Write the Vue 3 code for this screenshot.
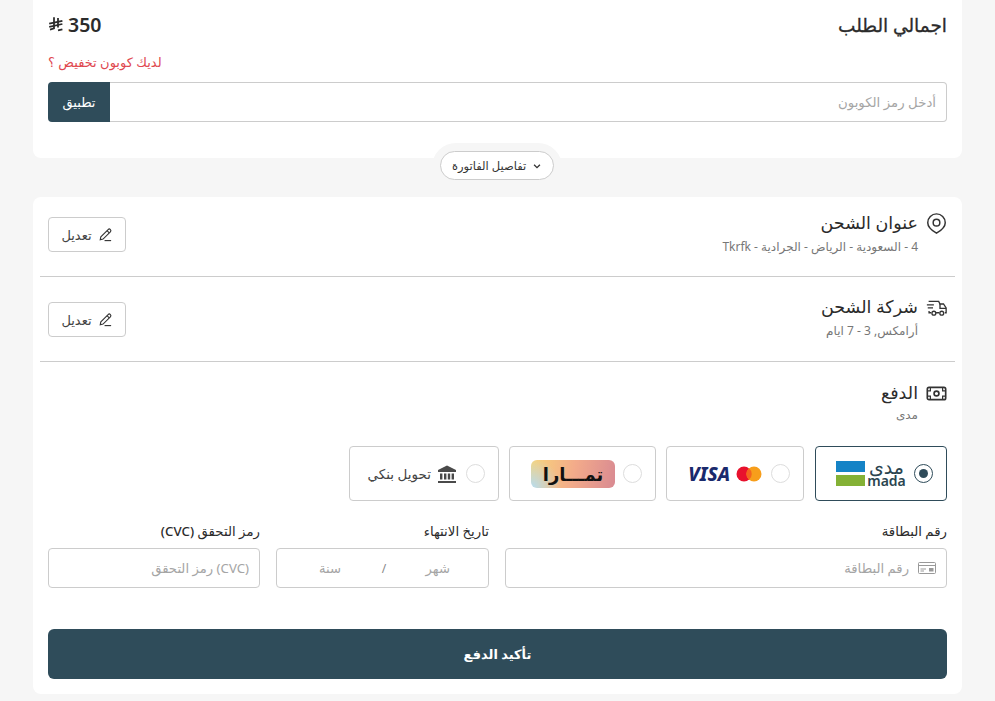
<template>
  <div class="page" dir="rtl">
    <section class="card summary">
      <div class="total-row">
        <h2>اجمالي الطلب</h2>
        <div class="total">
          <span>350</span>
          <svg class="sar" viewBox="0 0 20 20" fill="none" stroke="#2b2b2b" stroke-width="2.2">
            <path d="M7.5 1.5V15.5L2.5 17" />
            <path d="M12.5 2.5V14.5" />
            <path d="M1.5 9.5L18 6" />
            <path d="M1.5 13.5L18 10" />
            <path d="M12.5 18L18 16.8" />
          </svg>
        </div>
      </div>
      <a class="coupon-link">لديك كوبون تخفيض ؟</a>
      <div class="coupon">
        <input class="coupon-input" placeholder="أدخل رمز الكوبون" />
        <button class="apply">تطبيق</button>
      </div>
      <div class="details-wrap">
        <button class="details">
          <svg viewBox="0 0 12 12" width="10" height="10" fill="none" stroke="#333" stroke-width="1.6">
            <path d="M2.5 4.5L6 8L9.5 4.5" />
          </svg>
          تفاصيل الفاتورة
        </button>
      </div>
    </section>

    <section class="card checkout">
      <div class="step">
        <div class="step-head">
          <svg class="step-icon" viewBox="0 0 24 24" fill="none" stroke="#333" stroke-width="1.7">
            <path d="M12 23C6 19.5 2 15.5 2 11a10 10 0 0 1 20 0C22 15.5 18 19.5 12 23Z" />
            <circle cx="12" cy="11" r="3.8" />
          </svg>
          <div>
            <h3>عنوان الشحن</h3>
            <p>4 - السعودية - الرياض - الجرادية - Tkrfk</p>
          </div>
        </div>
        <button class="edit">
          <svg viewBox="0 0 16 16" width="15" height="15" fill="none" stroke="#333" stroke-width="1.2">
            <path d="M3 10.5L10.8 2.7a1.6 1.6 0 0 1 2.4 2.4L5.4 12.9L2.4 13.6Z" />
            <path d="M9.6 3.9L12 6.3" />
            <path d="M7 14.5H14" />
          </svg>
          تعديل
        </button>
      </div>

      <div class="step second">
        <div class="step-head">
          <svg class="step-icon" viewBox="0 0 24 24" fill="none" stroke="#333" stroke-width="1.5">
            <path d="M3 5H14.5L16 8H20L23 12.5V18H21.5M15 18H11.5M6 18H3.5V16" />
            <path d="M1 9H9M2 12.5H8" />
            <path d="M16 8V13H23" />
            <circle cx="9" cy="18.5" r="2.2" />
            <circle cx="18" cy="18.5" r="2.2" />
          </svg>
          <div>
            <h3>شركة الشحن</h3>
            <p>أرامكس, 3 - 7 ايام</p>
          </div>
        </div>
        <button class="edit">
          <svg viewBox="0 0 16 16" width="15" height="15" fill="none" stroke="#333" stroke-width="1.2">
            <path d="M3 10.5L10.8 2.7a1.6 1.6 0 0 1 2.4 2.4L5.4 12.9L2.4 13.6Z" />
            <path d="M9.6 3.9L12 6.3" />
            <path d="M7 14.5H14" />
          </svg>
          تعديل
        </button>
      </div>

      <div class="payment">
        <div class="step-head">
          <svg class="step-icon" viewBox="0 0 24 24" fill="none" stroke="#333" stroke-width="1.9">
            <rect x="1.5" y="5" width="21" height="14" rx="2" />
            <circle cx="12" cy="12" r="2.8" />
            <path d="M1.5 9H5V5M19 5V9H22.5M1.5 15H5V19M19 19V15H22.5" stroke-width="1.4" />
          </svg>
          <div>
            <h3>الدفع</h3>
            <p>مدى</p>
          </div>
        </div>

        <div class="methods">
          <label class="method mada active">
            <span class="radio"><span class="dot"></span></span>
            <span class="mada-logo">
              <span class="mada-text"><b class="ar">مدى</b><b>mada</b></span>
              <span class="mada-bars"><i class="blue"></i><i class="green"></i></span>
            </span>
          </label>
          <label class="method visa">
            <span class="radio"></span>
            <span class="cc">
              <svg viewBox="0 0 26 16" width="26" height="16">
                <circle cx="8" cy="8" r="7.5" fill="#e8112d" />
                <circle cx="18" cy="8" r="7.5" fill="#f79e1b" />
                <path d="M13 2.2a7.5 7.5 0 0 1 0 11.6a7.5 7.5 0 0 1 0-11.6Z" fill="#f4641f" />
              </svg>
              <span class="visa-text">VISA</span>
            </span>
          </label>
          <label class="method tamara">
            <span class="radio"></span>
            <span class="tamara-logo">تمـــارا</span>
          </label>
          <label class="method bank">
            <span class="radio"></span>
            <svg viewBox="0 0 20 20" width="20" height="20" fill="#4a4a4a">
              <path d="M10 1.5L19 6V8H1V6Z" />
              <rect x="3" y="9.5" width="2.4" height="6" />
              <rect x="7" y="9.5" width="2.4" height="6" />
              <rect x="10.8" y="9.5" width="2.4" height="6" />
              <rect x="14.6" y="9.5" width="2.4" height="6" />
              <rect x="1" y="17" width="18" height="2" />
            </svg>
            <span class="bank-label">تحويل بنكي</span>
          </label>
        </div>

        <div class="fields">
          <div class="field">
            <label>رقم البطاقة</label>
            <div class="box card-no">
              <svg viewBox="0 0 18 14" width="18" height="14" fill="none" stroke="#999" stroke-width="1">
                <rect x="0.5" y="1.5" width="17" height="11" rx="1" />
                <path d="M0.5 4.5H17.5" />
                <path d="M2.5 8H8M2.5 10H6" />
                <rect x="11" y="7" width="4.5" height="3.5" fill="#999" stroke="none" />
              </svg>
              <input placeholder="رقم البطاقة" />
            </div>
          </div>
          <div class="field">
            <label>تاريخ الانتهاء</label>
            <div class="box expiry">
              <input placeholder="شهر" />
              <span class="slash">/</span>
              <input placeholder="سنة" />
            </div>
          </div>
          <div class="field">
            <label>رمز التحقق (CVC)</label>
            <div class="box">
              <input placeholder="(CVC) رمز التحقق" />
            </div>
          </div>
        </div>

        <button class="confirm">تأكيد الدفع</button>
      </div>
    </section>
  </div>
</template>

<script setup>
</script>

<style>
html,
body {
  margin: 0;
  background: #f6f6f6;
}
</style>

<style scoped>
.page {
  width: 929px;
  height: 701px;
  margin-left: 33px;
  overflow: hidden;
  font-family: "Noto Sans", "DejaVu Sans", sans-serif;
  color: #2b2b2b;
}

h2,
h3,
p {
  margin: 0;
  font-weight: 500;
}

button,
input {
  font-family: inherit;
}

.card {
  background: #fff;
  border-radius: 8px;
}

.summary {
  position: relative;
  height: 158px;
  padding: 0 15px;
  box-sizing: border-box;
  border-radius: 0 0 8px 8px;
  margin-bottom: 39px;
}

.total-row {
  display: flex;
  justify-content: space-between;
  align-items: center;
  height: 48px;
}

.total-row h2 {
  font-size: 18.5px;
  font-weight: 500;
  -webkit-text-stroke: 0.3px #2b2b2b;
}

.total {
  display: flex;
  align-items: center;
  gap: 4px;
  font-size: 19.5px;
  font-weight: 600;
}

.sar {
  width: 16px;
  height: 16px;
}

.coupon-link {
  display: block;
  height: 34px;
  line-height: 28px;
  font-size: 13px;
  color: #e0484f;
  text-align: left;
}

.coupon {
  display: flex;
  height: 40px;
}

.coupon-input {
  flex: 1;
  min-width: 0;
  padding: 0 10px;
  border: 1px solid #ccc;
  border-left: none;
  border-radius: 0 4px 4px 0;
  font-size: 13.3px;
  outline: none;
}

input::placeholder {
  color: #a5a5a5;
}

.apply {
  width: 62px;
  border: none;
  border-radius: 4px 0 0 4px;
  background: #2f4c5a;
  color: #fff;
  font-size: 13px;
}

.details-wrap {
  position: absolute;
  left: 399px;
  top: 143px;
  padding: 8px 8px 0;
  background: #f6f6f6;
  border-radius: 24px 24px 0 0;
}

.details {
  display: flex;
  align-items: center;
  gap: 6px;
  height: 29px;
  padding: 0 11px;
  background: #fff;
  border: 1px solid #ccc;
  border-radius: 15px;
  font-size: 11.5px;
  color: #333;
}

.checkout {
  height: 497px;
}

.step {
  display: flex;
  justify-content: space-between;
  align-items: flex-start;
  height: 80px;
  margin: 0 7px;
  padding: 13px 8px 0;
  box-sizing: border-box;
  border-bottom: 1px solid #ccc;
}

.step.second {
  height: 85px;
  padding-top: 17px;
}

.step-head {
  display: flex;
  align-items: flex-start;
  gap: 8px;
}

.step-icon {
  width: 21px;
  height: 21px;
  margin-top: 3px;
}

.step-head h3 {
  font-size: 17.5px;
  line-height: 24px;
}

.step-head p {
  font-size: 12px;
  line-height: 26px;
  color: #777;
  font-weight: 400;
}

.edit {
  display: flex;
  align-items: center;
  justify-content: center;
  gap: 6px;
  width: 78px;
  height: 35px;
  margin-top: 7px;
  background: #fff;
  border: 1px solid #ccc;
  border-radius: 4px;
  font-size: 13px;
  color: #444;
}

.second .edit {
  margin-top: 8px;
}

.payment {
  padding: 18px 15px 0;
}

.payment .step-head p {
  line-height: 22px;
}

.methods {
  display: flex;
  gap: 10px;
  margin-top: 20px;
  height: 55px;
}

.method {
  display: flex;
  align-items: center;
  gap: 9px;
  padding: 0 13px;
  box-sizing: border-box;
  border: 1px solid #ccc;
  border-radius: 4px;
  font-size: 13.5px;
  color: #444;
}

.method.active {
  border-color: #2f4c5a;
}

.mada {
  width: 132px;
  margin-left: 1px;
}

.visa {
  width: 138px;
}

.tamara {
  width: 147px;
}

.bank {
  width: 150px;
}

.bank-label {
  margin-right: -3px;
}

.radio {
  display: flex;
  align-items: center;
  justify-content: center;
  flex: none;
  width: 19px;
  height: 19px;
  box-sizing: border-box;
  border: 1px solid #ddd;
  border-radius: 50%;
}

.active .radio {
  border-color: #2f4c5a;
}

.dot {
  width: 9px;
  height: 9px;
  border-radius: 50%;
  background: #2f4c5a;
}

.mada-logo {
  display: flex;
  align-items: center;
  gap: 3px;
}

.mada-bars {
  display: flex;
  flex-direction: column;
  gap: 3px;
}

.mada-bars i {
  display: block;
  width: 29px;
  height: 11px;
}

.mada-bars .blue {
  background: #1583c6;
}

.mada-bars .green {
  background: #84b135;
}

.mada-text {
  display: flex;
  flex-direction: column;
  align-items: center;
  width: 37px;
  font-size: 14px;
  line-height: 14px;
  color: #2b4550;
}

.mada-text b {
  font-weight: 600;
}

.mada-text .ar {
  font-size: 19px;
  font-weight: 500;
}

.cc {
  display: flex;
  align-items: center;
  gap: 6px;
}

.visa-text {
  font-size: 19px;
  font-weight: 800;
  font-style: italic;
  color: #1a2a6c;
  direction: ltr;
}

.tamara-logo {
  display: flex;
  align-items: center;
  justify-content: center;
  width: 84px;
  height: 28px;
  margin-right: -1px;
  border-radius: 6px;
  background:
    radial-gradient(circle at 0 100%, #b5dcf2 0, rgba(181, 220, 242, 0) 34%),
    linear-gradient(100deg, #f8d67a 0%, #f3ab8a 50%, #d98a92 100%);
  color: #111;
  font-size: 18px;
  font-weight: 700;
}

.fields {
  display: grid;
  grid-template-columns: 442px 213px 212px;
  gap: 16px;
  margin-top: 22px;
}

.field label {
  display: block;
  font-size: 13.3px;
  line-height: 17px;
  font-weight: 500;
  margin-bottom: 8px;
}

.box {
  display: flex;
  align-items: center;
  gap: 9px;
  height: 40px;
  padding: 0 10px;
  box-sizing: border-box;
  border: 1px solid #ccc;
  border-radius: 4px;
  background: #fff;
}

.box input {
  flex: 1;
  width: 100%;
  min-width: 0;
  border: none;
  outline: none;
  font-size: 13.2px;
  padding: 0;
  background: none;
}

.expiry {
  gap: 0;
  padding: 0;
  color: #888;
  font-size: 12px;
}

.expiry input {
  flex: none;
  width: 99px;
  padding-right: 38px;
  box-sizing: border-box;
}

.slash {
  width: 10px;
  text-align: center;
}

.confirm {
  display: block;
  width: 100%;
  height: 50px;
  margin-top: 41px;
  border: none;
  border-radius: 6px;
  background: #2f4c5a;
  color: #fff;
  font-size: 13px;
  font-weight: 700;
}
</style>
